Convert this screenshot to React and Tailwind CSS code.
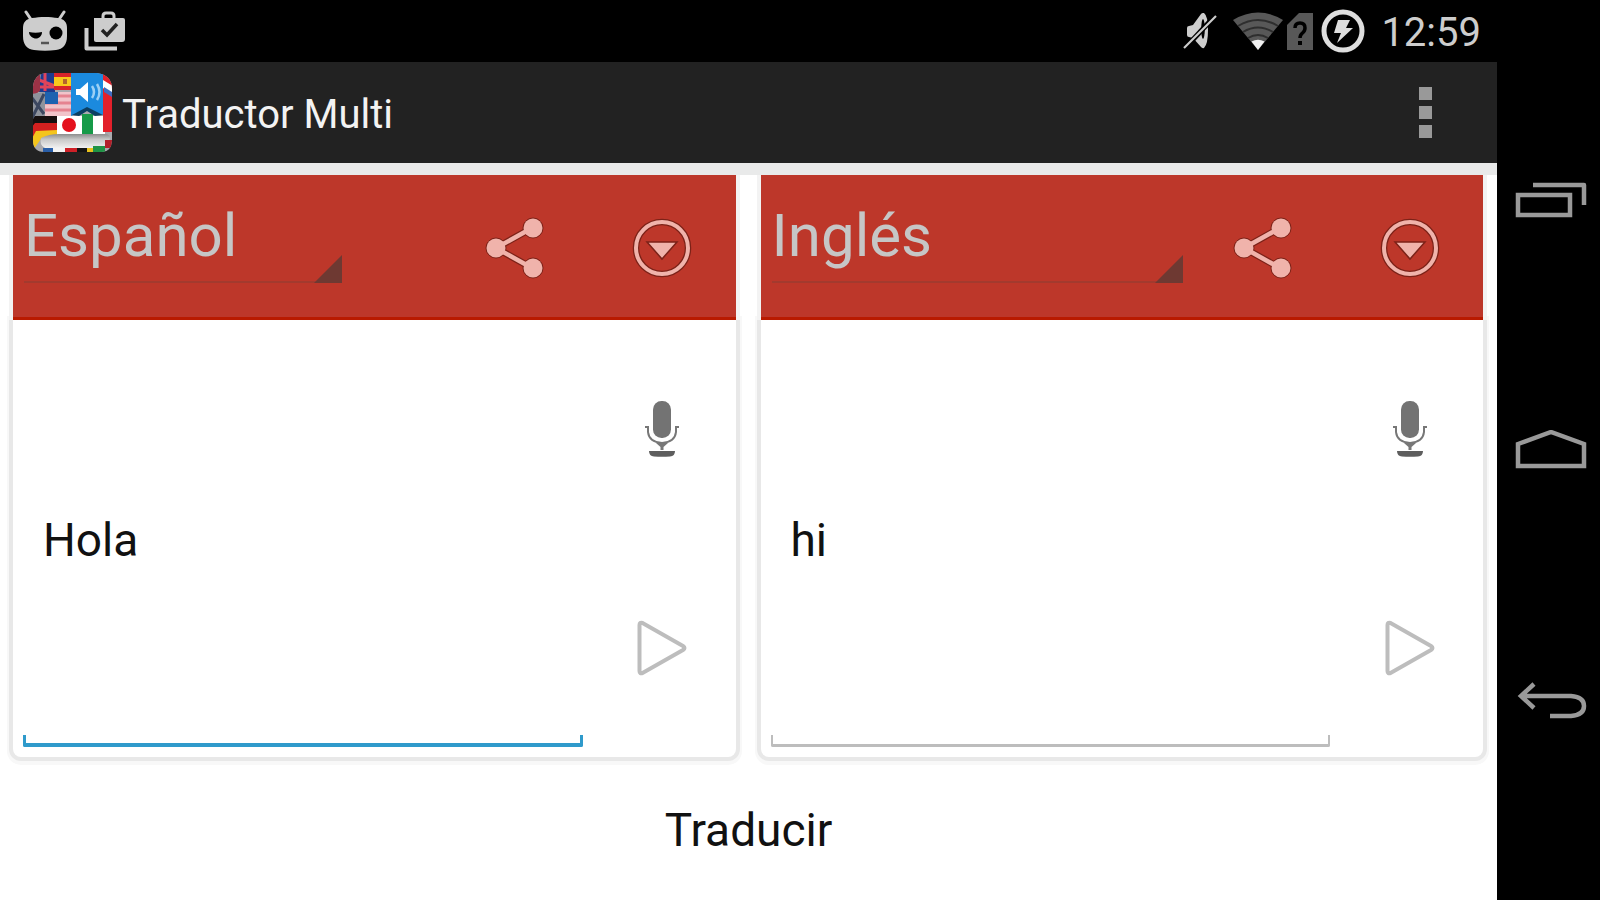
import React from 'react';

const CyanogenIcon = () => (
  <svg viewBox="0 0 46 42" className="h-[42px] w-[46px]" aria-hidden="true">
    <path d="M4 2l6 9M42 2l-6 9" stroke="#cdcdcd" strokeWidth="3" strokeLinecap="round" fill="none" />
    <path d="M10 8c8-1.500 18-1.500 26 0 6 1 9 4 9 10v8c0 9-4 13-11 14-7 1-15 1-22 0-7-1-11-5-11-14v-8c0-6 3-9 9-10z" fill="#cdcdcd" />
    <path d="M7 22c4 1 9 1 13 0 0 4-3 6.500-6 6.500S7 26 7 22z" fill="#000" />
    <circle cx="34" cy="23" r="6.500" fill="#000" />
    <path d="M19 33h8" stroke="#555" strokeWidth="2.500" />
  </svg>
);

const ShopCheckIcon = () => (
  <svg viewBox="0 0 42 42" className="h-[42px] w-[42px]" aria-hidden="true">
    <path d="M2.500 18v20.500H33" stroke="#cdcdcd" strokeWidth="4" fill="none" strokeLinejoin="round" />
    <path d="M19 9V6q0-3 3-3h5q3 0 3 3v3" stroke="#cdcdcd" strokeWidth="3" fill="none" />
    <path d="M10 8h29q2 0 2 2v19q0 3-3 3H12q-2 0-2-2z" fill="#cdcdcd" />
    <path d="M18 20l5 5 10-11" stroke="#222" strokeWidth="3.500" fill="none" />
  </svg>
);

const MutedIcon = () => (
  <svg viewBox="0 0 34 40" className="h-10 w-[34px]" aria-hidden="true">
    <path d="M4 17q0-2 2-2l4-1 8-11q1-1.500 3-1 4 3 4 17t-4 18q-2 .5-3-1l-8-9-4-1q-2 0-2-2z" fill="#cdcdcd" />
    <ellipse cx="20" cy="18" rx="1.800" ry="10" fill="#000" />
    <path d="M31 6L3 36" stroke="#000" strokeWidth="5" />
    <path d="M33 5L1 37" stroke="#cdcdcd" strokeWidth="2.200" />
  </svg>
);

const WifiIcon = () => (
  <svg viewBox="0 0 50 38" className="h-[38px] w-[50px]" aria-hidden="true">
    <path d="M0 8Q25-7 50 8L25 38z" fill="#585858" />
    <path d="M5 14Q25 2 45 14M10 20Q25 11 40 20M15 26Q25 20 35 26" stroke="#2e2e2e" strokeWidth="2" fill="none" />
    <path d="M18.500 29.500Q25 26 31.500 29.500L25 38z" fill="#f2f2f2" />
  </svg>
);

const SimIcon = () => (
  <svg viewBox="0 0 26 37" className="h-[37px] w-[26px]" aria-hidden="true">
    <path d="M12 0h14v37H0V12z" fill="#585858" />
    <path d="M8 15q0-5 5-5t5 5q0 3-2.500 5T13 25" stroke="#000" strokeWidth="3.500" fill="none" />
    <path d="M11 28h4v4h-4z" fill="#000" />
  </svg>
);

const ChargeIcon = () => (
  <svg viewBox="0 0 44 44" className="h-11 w-11" aria-hidden="true">
    <circle cx="22" cy="22" r="19" stroke="#dedede" strokeWidth="5" fill="none" />
    <path d="M17 11h12l-4 8h7L16 34l4-10h-7z" fill="#dedede" />
  </svg>
);

const AppIcon = () => (
  <svg viewBox="0 0 82 82" className="h-[82px] w-[82px]" aria-hidden="true">
    <defs>
      <clipPath id="book">
        <path d="M14 1h52q15 2 15 16v52q-1 11-10 11H13Q2 80 2 68V14Q3 3 14 1z" />
      </clipPath>
      <linearGradient id="pages" x1="0" y1="0" x2="0" y2="1">
        <stop offset="0" stopColor="#8d8d8d" />
        <stop offset="0.4" stopColor="#c9c9c9" />
        <stop offset="1" stopColor="#f1f1f1" />
      </linearGradient>
    </defs>
    <g clipPath="url(#book)">
      <path d="M0 0h82v82H0z" fill="#a9a9ad" />
      <path d="M10 0h14v20H8z" fill="#1d3b8f" />
      <path d="M8 8l16 6M8 15h16M14 1v18" stroke="#e0445a" strokeWidth="3" />
      <path d="M0 4l9-2v17l-9 6z" fill="#9c3246" />
      <path d="M23 0h17v18H23z" fill="#d8232a" />
      <path d="M23 5h17v9H23z" fill="#f8c81c" />
      <path d="M32 7h4v5h-4z" fill="#b4632c" />
      <path d="M14 20h26v24H14z" fill="#f1c4ca" />
      <path d="M14 24h26M14 31h26M14 38h26" stroke="#e58390" strokeWidth="3" />
      <path d="M14 20h13v12H14z" fill="#1d62b0" />
      <path d="M0 22l14-2v24L0 52z" fill="#8f939c" />
      <path d="M1 26l12 16M13 22L1 46" stroke="#3c4760" strokeWidth="3" />
      <path d="M4 44h22v8L0 58V50z" fill="#161010" />
      <path d="M0 56l4-5h22v8L4 63 0 68z" fill="#d3201f" />
      <path d="M0 68l5-9 21-1v5l-16 4-8 11H0z" fill="#f4c51c" />
      <path d="M26 44h48v20H26z" fill="#fff" />
      <circle cx="38" cy="53" r="7" fill="#e4101c" />
      <path d="M51 42h11v21H51z" fill="#169a48" />
      <path d="M72 0h10v60H72z" fill="#e3202b" />
      <path d="M72 8l10 6v8l-10-6z" fill="#fff" />
      <path d="M73 15l8 5v5l-8-5z" fill="#3f6bc0" />
      <path d="M40 0h32v43L56 37 40 44z" fill="#1b8ade" />
      <path d="M41 43l15-8 16 8-8 1-8-5-8 5z" fill="#0b3f63" />
      <path d="M45 17h4l8-7v20l-8-7h-4z" fill="#fff" />
      <path d="M61 14q4 6 0 12M66 12q5 8 0 16" stroke="#9bd0f5" strokeWidth="2.500" fill="none" />
      <path d="M10 66q8-4 18-4h46q5 0 5 4-1 9-8 10H14q-6-3-4-10z" fill="url(#pages)" />
      <path d="M74 68h8v8h-8z" fill="#b3202a" />
      <path d="M12 76h10v6H12z" fill="#2a5fa8" />
      <path d="M22 76h12v6H22z" fill="#f2f2f2" />
      <path d="M34 76h12v6H34z" fill="#cf2027" />
      <path d="M46 76h10v6H46z" fill="#151515" />
      <path d="M56 76h6v6h-6z" fill="#e8c11c" />
      <path d="M62 74h12v8H62z" fill="#1f9445" />
    </g>
  </svg>
);

const ShareIcon = () => (
  <svg viewBox="0 0 62 64" className="h-16 w-[62px]" aria-hidden="true">
    <g stroke="#7c2218" fill="#7c2218">
      <path d="M48 12L12 32l36 20" strokeWidth="7" fill="none" />
      <circle cx="49" cy="12" r="10" />
      <circle cx="12" cy="32" r="10" />
      <circle cx="49" cy="52" r="10" />
    </g>
    <path d="M48 12L12 32l36 20" stroke="#f0b3ab" strokeWidth="4.500" fill="none" />
    <g fill="#f0b3ab">
      <circle cx="49" cy="12" r="9.500" />
      <circle cx="12" cy="32" r="9.500" />
      <circle cx="49" cy="52" r="9.500" />
    </g>
  </svg>
);

const DropIcon = () => (
  <svg viewBox="0 0 60 60" className="h-[60px] w-[60px]" aria-hidden="true">
    <circle cx="30" cy="30" r="26" stroke="#7c2218" strokeWidth="6.500" fill="none" />
    <circle cx="30" cy="30" r="26" stroke="#f0b3ab" strokeWidth="4" fill="none" />
    <path d="M15 24h30L30 41z" fill="#f0b3ab" stroke="#7c2218" strokeWidth="1.500" />
  </svg>
);

const MicIcon = () => (
  <svg viewBox="0 0 36 56" className="h-14 w-9" aria-hidden="true">
    <rect x="9" y="0" width="18" height="37" rx="8.500" fill="#737373" />
    <path d="M1 26h3v5q1 10 14 11 13-1 14-11v-5h3" stroke="#777" strokeWidth="2" fill="none" />
    <path d="M12 42h12l-4.500 4v3h-3v-3z" fill="#777" />
    <path d="M5 50h26q0 5-5 5.500-8 .7-16 0Q5 55 5 50z" fill="#5e5e5e" />
  </svg>
);

const PlayIcon = () => (
  <svg viewBox="0 0 52 56" className="h-14 w-[52px]" aria-hidden="true">
    <path d="M3.500 5q0-3 3-2L47 26q3 2 0 4L6.500 53q-3 1-3-2z" stroke="#bdbdbd" strokeWidth="4" fill="none" strokeLinejoin="round" />
  </svg>
);

const languages = ['Español', 'Inglés', 'Francés', 'Alemán'];

function Panel({ id, language, text, compact, active }) {
  return (
    <section className="flex min-w-0 flex-1 flex-col">
      <header className="relative flex h-[145px] items-start border-b-3 border-[#b91a00] bg-[#bd372a] pl-[11px] shadow-[4px_0_0_#f3f3f3,-4px_0_0_#f3f3f3]">
        <div className={`relative mt-3 h-24 border-b-2 border-[#a33a2e] ${compact ? 'w-[318px]' : 'mr-[6px] flex-1'}`}>
          <select
            aria-label={`Idioma ${id}`}
            defaultValue={language}
            className="h-full w-full appearance-none bg-transparent pt-1 text-[60px] text-[#c6c6c6] outline-none"
          >
            {languages.map((name) => (
              <option key={name} className="text-black">{name}</option>
            ))}
          </select>
          <svg viewBox="0 0 28 28" className="pointer-events-none absolute right-0 -bottom-0.5 size-7" aria-hidden="true">
            <path d="M28 0v28H0z" fill="#6e3932" />
          </svg>
        </div>
        <div className="ml-auto flex self-stretch pt-1">
          <button aria-label="Compartir" className="flex w-[147px] items-center justify-center">
            <ShareIcon />
          </button>
          <button aria-label="Más opciones" className="flex w-[147px] items-center justify-center">
            <DropIcon />
          </button>
        </div>
      </header>
      <div className="flex flex-1 rounded-b-lg bg-white shadow-[0_0_0_4px_#e8e8e8,0_2px_0_6px_#f8f8f8]">
        <div className="relative mt-[10px] mr-[6px] mb-[10px] ml-[10px] flex flex-1">
          <input
            aria-label={`Texto ${id}`}
            defaultValue={text}
            className="h-full w-full min-w-0 bg-transparent px-5 pt-[2px] text-[46px] text-[#111] outline-none"
          />
          <span
            className={`pointer-events-none absolute inset-x-0 bottom-0 h-3 rounded-b-xs ${
              active ? 'border-x-3 border-b-4 border-[#2f9acb]' : 'border-x-2 border-b-3 border-[#bdbdbd]'
            }`}
          />
        </div>
        <div className="flex w-[147px] flex-col">
          <button aria-label="Dictar" className="flex flex-1 items-center justify-center">
            <MicIcon />
          </button>
          <button aria-label="Escuchar" className="flex flex-1 items-center justify-center">
            <PlayIcon />
          </button>
        </div>
      </div>
    </section>
  );
}

export default function App() {
  return (
    <div className="flex min-h-screen bg-black font-['Roboto',sans-serif]">
      <div className="flex min-w-0 flex-1 flex-col">
        <div className="flex h-[62px] items-center pr-4 pl-[22px]">
          <CyanogenIcon />
          <span className="ml-4 flex">
            <ShopCheckIcon />
          </span>
          <div className="ml-auto flex items-center">
            <MutedIcon />
            <span className="ml-4 flex">
              <WifiIcon />
            </span>
            <span className="ml-1 flex">
              <SimIcon />
            </span>
            <span className="ml-2 flex">
              <ChargeIcon />
            </span>
            <time className="ml-4 pt-1 text-[40px] leading-none text-[#cdcdcd]">12:59</time>
          </div>
        </div>
        <div className="flex h-[101px] items-center bg-[#222] pr-12 pl-[31px]">
          <AppIcon />
          <h1 className="ml-[9px] pt-1 text-[40px] text-[#f3f3f3]">Traductor Multi</h1>
          <button aria-label="Menú" className="ml-auto flex w-12 flex-col items-center gap-[6px]">
            <span className="size-[13px] bg-[#999]" />
            <span className="size-[13px] bg-[#999]" />
            <span className="size-[13px] bg-[#999]" />
          </button>
        </div>
        <main className="flex flex-1 flex-col border-t-12 border-[#e9eaea] bg-white">
          <div className="flex flex-1 gap-[25px] pr-[14px] pl-[13px]">
            <Panel id="de origen" language="Español" text="Hola" compact active />
            <Panel id="de destino" language="Inglés" text="hi" />
          </div>
          <button className="h-[143px] pt-1 text-[46px] text-[#111]">Traducir</button>
        </main>
      </div>
      <nav aria-label="Sistema" className="flex w-[103px] flex-col items-center justify-center gap-[164px] pl-1">
        <button aria-label="Recientes" className="flex h-[86px] items-center">
          <svg viewBox="0 0 72 36" className="h-9 w-[72px]" fill="none" stroke="#999" strokeWidth="4.500" aria-hidden="true">
            <path d="M18 3h51v20" strokeLinejoin="round" />
            <path d="M3 13h52v20H3z" />
          </svg>
        </button>
        <button aria-label="Inicio" className="flex h-[86px] items-center">
          <svg viewBox="0 0 72 40" className="h-10 w-[72px]" fill="none" stroke="#999" strokeWidth="4.500" aria-hidden="true">
            <path d="M3 14L36 2l33 12v22H3z" />
          </svg>
        </button>
        <button aria-label="Atrás" className="flex h-[86px] items-center">
          <svg viewBox="0 0 72 40" className="h-10 w-[72px]" fill="none" stroke="#999" strokeWidth="4.500" aria-hidden="true">
            <path d="M19 4L6 16l13 12M6 16h50q13 1 13 10t-13 10H35" />
          </svg>
        </button>
      </nav>
    </div>
  );
}
